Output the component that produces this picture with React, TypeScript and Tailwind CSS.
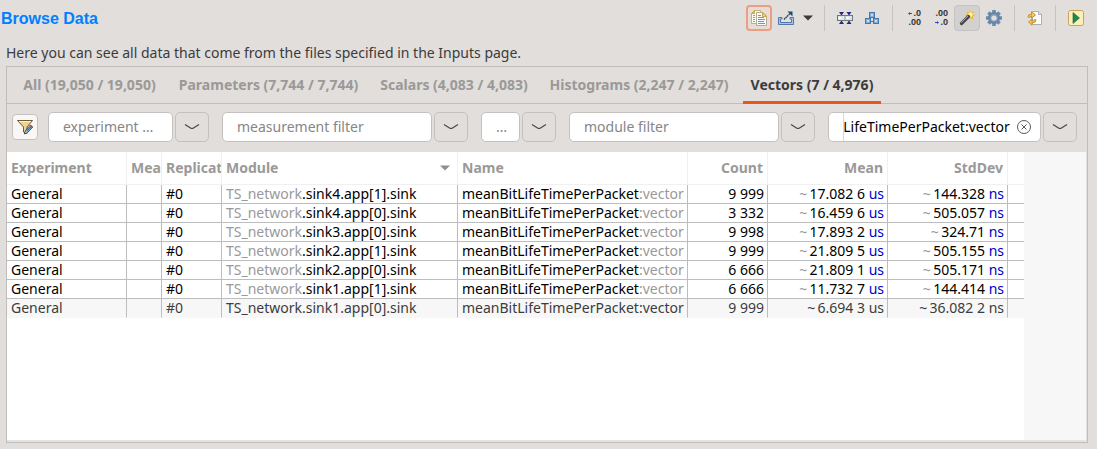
import React from "react";

function CopyIcon() {
  return (
    <svg width="16" height="16" viewBox="0 0 16 16" className="shrink-0" aria-hidden="true">
      <path d="M3.500 .5H9.500V13.500H.5V3.500Z" fill="#fbfaf0" stroke="#c9b36a" />
      <path d="M.5 3.500H3.500V.5Z" fill="#e2c15c" stroke="#c9a94e" />
      <path d="M2 5.500H4M2 7.500H4M2 9.500H4M2 11.500H4" stroke="#8ba2c8" />
      <path d="M5.500 2.500H12L15.500 6V15.500H5.500Z" fill="#f6f9fd" stroke="#b0ad92" />
      <path d="M11.500 2.500V6.500H15.500Z" fill="#f0d684" stroke="#c9a94e" />
      <path d="M7 5.500H10M7 7.500H13M7 9.500H14M7 11.500H13M7 13.500H14" stroke="#7394cc" />
    </svg>
  );
}

function ExportIcon() {
  return (
    <svg width="16" height="16" viewBox="0 0 16 16" aria-hidden="true">
      <path d="M.5 7.500H4V9H2.500V12.500H13.500V9H12V7.500H15.500V14.500H.5Z" fill="#a9c3e6" stroke="#5577ad" />
      <path d="M6 9.500L12 3.500" stroke="#1c4263" strokeWidth="1.400" strokeDasharray="1.600 .6" />
      <path d="M9.500 1.500H14.500V6.500Z" fill="#1c4c73" />
    </svg>
  );
}

function CellWidthIcon() {
  return (
    <svg width="16" height="16" viewBox="0 0 16 16" aria-hidden="true">
      <path d="M2 2H7L4.500 5.500ZM9.500 2H14.500L12 5.500ZM2 14H7L4.500 10.500ZM9.500 14H14.500L12 10.500Z" fill="#25258c" />
      <rect x=".5" y="5.500" width="15" height="5" fill="#dce8e6" stroke="#6c7775" />
      <path d="M2 7H4V9H2ZM9.500 7H11.500V9H9.500Z" fill="#fff" />
      <path d="M8 5.500V10.500" stroke="#8b9a98" />
    </svg>
  );
}

function CubesIcon() {
  return (
    <svg width="16" height="16" viewBox="0 0 16 16" aria-hidden="true">
      <g fill="#86aedb" stroke="#4776a8">
        <rect x="5.500" y="2.500" width="5" height="5" />
        <rect x="1.500" y="8.500" width="5" height="5" />
        <rect x="9.500" y="8.500" width="5" height="5" />
      </g>
      <path d="M7 4H9V6H7ZM3 10H5V12H3ZM11 10H13V12H11Z" fill="#c3dbf2" />
      <path d="M6.500 11.500H9.500" stroke="#4776a8" />
    </svg>
  );
}

function Arrow({ flip = false }: { flip?: boolean }) {
  return (
    <svg width="4" height="3" viewBox="0 0 4 3" className={flip ? "rotate-180" : ""} aria-hidden="true">
      <path d="M0 1.500L2 0V3ZM1.500 1H4V2H1.500Z" fill="#2d45d0" />
    </svg>
  );
}

function DecimalsIcon({ more }: { more: boolean }) {
  return (
    <span className="flex w-4 flex-col items-end font-['Liberation_Sans'] text-[9px] leading-[9px] font-bold text-[#333]">
      <span className="flex items-center gap-px">{more ? <Arrow /> : null}{more ? ".0" : ".00"}</span>
      <span className="flex items-center gap-px">{more ? null : <Arrow flip />}{more ? ".00" : ".0"}</span>
    </span>
  );
}

function WandIcon() {
  return (
    <svg width="16" height="16" viewBox="0 0 16 16" aria-hidden="true">
      <path d="M11 0L12 2.500L15 1L13.800 4L16 5.500L13.500 6.500L14.500 9.500L11.500 8L9.500 9.500L9 6.500L5.500 5.500L8.500 4L7.500 1.500L10 2.500Z" fill="#f4b91d" />
      <circle cx="11.500" cy="4.500" r="2.200" fill="#fff3a8" />
      <path d="M2.500 13.500L9.500 6.500" stroke="#48484a" strokeWidth="3.200" strokeLinecap="round" />
      <path d="M2.200 12.800L9 6" stroke="#a5a5a5" />
    </svg>
  );
}

function GearIcon() {
  return (
    <svg width="16" height="16" viewBox="0 0 16 16" aria-hidden="true">
      <g stroke="#6c8cab" strokeWidth="3.600">
        <path d="M8 0V16M0 8H16M2.400 2.400L13.600 13.600M13.600 2.400L2.400 13.600" />
      </g>
      <circle cx="8" cy="8" r="5" fill="#7f9dba" stroke="#6484a5" strokeWidth="2" />
      <circle cx="8" cy="8" r="2.600" fill="#e1dedb" />
    </svg>
  );
}

function RefreshFileIcon() {
  return (
    <svg width="16" height="16" viewBox="0 0 16 16" aria-hidden="true">
      <path d="M5.500 1.500H11.500L14.500 4.500V14.500H5.500Z" fill="#fdfdfd" stroke="#a9aebb" />
      <path d="M11.500 1.500V4.500H14.500" fill="#dbe3f0" stroke="#a9aebb" />
      <path d="M2 8V7Q2 5 5 5M8 9V10Q8 12 4.500 12" fill="none" stroke="#c98d22" strokeWidth="2.600" />
      <path d="M4.500 1.800L8.500 5L4.500 8ZM5 9L1.500 12L5 15.200Z" fill="#f4cd6a" stroke="#c98d22" />
      <path d="M2 8V7Q2 5 5 5M8 9V10Q8 12 4.500 12" fill="none" stroke="#f4cd6a" />
    </svg>
  );
}

function RunIcon() {
  return (
    <svg width="16" height="16" viewBox="0 0 16 16" aria-hidden="true">
      <rect x=".5" y=".5" width="15" height="15" rx="2" fill="#fdefb8" stroke="#c9a35e" />
      <path d="M5 2.500L11.500 8L5 13.500Z" fill="#1f8a4a" stroke="#14693a" strokeWidth=".6" />
    </svg>
  );
}

function FunnelIcon() {
  return (
    <svg width="18" height="18" viewBox="0 0 18 18" aria-hidden="true">
      <path d="M1.500 2.500H16.500L11 9V15.500L7.500 14V9Z" fill="#efd58b" stroke="#5c4b28" strokeWidth=".9" />
      <path d="M3 3.500H15" stroke="#fff3c8" />
      <path d="M8.500 16L9.500 12.500L14.500 7L16.700 9L11.500 14.500Z" fill="#fff" stroke="#29323c" strokeWidth=".9" />
      <path d="M10.500 13.500L15 8.800" stroke="#2d7fb8" strokeWidth="1.800" />
      <path d="M14 7.500L16.500 9.500" stroke="#b5452f" strokeWidth="1.500" />
    </svg>
  );
}

function ToolButton({ label, look = "plain", children }: {
  label: string;
  look?: "plain" | "focused" | "pressed";
  children: React.ReactNode;
}) {
  const looks = {
    plain: "border border-transparent",
    focused: "border-2 border-[#eb9e83] bg-[#e6ddd6]",
    pressed: "border border-[#c3c3c3] bg-[#d2d1cf]",
  };
  return (
    <button type="button" aria-label={label} className={`flex size-[26px] items-center justify-center rounded-[4px] ${looks[look]}`}>
      {children}
    </button>
  );
}

function Separator() {
  return <span className="h-[26px] w-px bg-[#c6c3c0]" />;
}

const tabs = [
  { label: "All (19,050 / 19,050)", width: "w-[149px]" },
  { label: "Parameters (7,744 / 7,744)", width: "w-[193px]" },
  { label: "Scalars (4,083 / 4,083)", width: "w-[162px]" },
  { label: "Histograms (2,247 / 2,247)", width: "w-[192px]" },
  { label: "Vectors (7 / 4,976)", width: "w-[138px]", active: true },
];

const filters = [
  { label: "Experiment", placeholder: "experiment …", value: "" },
  { label: "Measurement", placeholder: "measurement filter", value: "" },
  { label: "Replication", placeholder: "…", value: "" },
  { label: "Module", placeholder: "module filter", value: "" },
  { label: "Name", placeholder: "name filter", value: "meanBitLifeTimePerPacket:vector" },
];

const columns = [
  { label: "Experiment", width: "w-[120px]" },
  { label: "Mea", width: "w-[35px]" },
  { label: "Replicat", width: "w-[60px]" },
  { label: "Module", width: "w-[236px]", sorted: true },
  { label: "Name", width: "w-[230px]" },
  { label: "Count", width: "w-[80px]", right: true },
  { label: "Mean", width: "w-[120px]", right: true },
  { label: "StdDev", width: "w-[120px]", right: true },
  { label: "", width: "w-[16px]" },
];

const rows = [
  { module: ".sink4.app[1].sink", count: "9 999", mean: "17.082 6", dev: "144.328" },
  { module: ".sink4.app[0].sink", count: "3 332", mean: "16.459 6", dev: "505.057" },
  { module: ".sink3.app[0].sink", count: "9 998", mean: "17.893 2", dev: "324.71" },
  { module: ".sink2.app[1].sink", count: "9 999", mean: "21.809 5", dev: "505.155" },
  { module: ".sink2.app[0].sink", count: "6 666", mean: "21.809 1", dev: "505.171" },
  { module: ".sink1.app[1].sink", count: "6 666", mean: "11.732 7", dev: "144.414" },
  { module: ".sink1.app[0].sink", count: "9 999", mean: "6.694 3", dev: "36.082 2", selected: true },
];

const scrollToEnd = (el: HTMLInputElement | null) => {
  if (el) el.scrollLeft = el.scrollWidth;
};

function Filter({ label, placeholder, value }: { label: string; placeholder: string; value: string }) {
  return (
    <div className="flex min-w-0 gap-[2px]">
      <div className="flex h-[30px] min-w-0 flex-1 items-center rounded-[5px] border border-[#c4c2c0] bg-white pl-[14px]">
        <input
          ref={scrollToEnd}
          aria-label={`${label} filter`}
          placeholder={placeholder}
          defaultValue={value}
          className={`h-full min-w-0 flex-1 bg-transparent pb-px text-black outline-none placeholder:text-[#868686] ${value ? "border-l border-[#d8d8d8]" : ""}`}
        />
        {value ? (
          <button type="button" aria-label="Clear" className="mr-2 ml-[6px] shrink-0">
            <svg width="16" height="16" viewBox="0 0 16 16" fill="none" stroke="#5a5a5a" aria-hidden="true">
              <circle cx="8" cy="8" r="6.500" />
              <path d="M5.500 5.500L10.500 10.500M10.500 5.500L5.500 10.500" />
            </svg>
          </button>
        ) : null}
      </div>
      <button type="button" aria-label={`${label} choices`} className="flex h-[30px] w-[34px] shrink-0 items-center justify-center rounded-[5px] border border-[#c4c2c0]">
        <svg width="16" height="8" viewBox="0 0 16 8" fill="none" stroke="#4a4a4a" strokeWidth="1.200" aria-hidden="true">
          <path d="M1 1.500L6.500 5Q8 6 9.500 5L15 1.500" />
        </svg>
      </button>
    </div>
  );
}

export default function App() {
  const line = "border-r border-r-[#bdbdbd]";
  return (
    <main className="flex min-h-screen flex-col bg-[#e1dedb] font-['Noto_Sans','Open_Sans',sans-serif] text-[14px] leading-[18px] text-[#3c3c3c]">
      <header className="flex h-9 items-center justify-between pr-2 pl-px">
        <h1 className="pt-[2px] font-['Liberation_Sans',Arial,sans-serif] text-[16px] font-bold text-[#0080ff]">Browse Data</h1>
        <div className="flex items-center">
          <div className="flex gap-px">
            <ToolButton label="Copy" look="focused"><CopyIcon /></ToolButton>
            <ToolButton label="Export"><ExportIcon /></ToolButton>
          </div>
          <button type="button" aria-label="Export options" className="mr-[10px] ml-[3px]">
            <svg width="12" height="6" viewBox="0 0 12 6" aria-hidden="true"><path d="M1 .5H11L6 5.500Z" fill="#3a3a3a" /></svg>
          </button>
          <Separator />
          <div className="flex gap-px px-[7px]">
            <ToolButton label="Narrow columns"><CellWidthIcon /></ToolButton>
            <ToolButton label="Group by module"><CubesIcon /></ToolButton>
          </div>
          <Separator />
          <div className="flex gap-px px-[7px]">
            <ToolButton label="Increase decimals"><DecimalsIcon more /></ToolButton>
            <ToolButton label="Decrease decimals"><DecimalsIcon more={false} /></ToolButton>
            <ToolButton label="Highlight" look="pressed"><WandIcon /></ToolButton>
            <ToolButton label="Settings"><GearIcon /></ToolButton>
          </div>
          <Separator />
          <div className="flex px-[7px]">
            <ToolButton label="Reload"><RefreshFileIcon /></ToolButton>
          </div>
          <Separator />
          <div className="flex pl-[7px]">
            <ToolButton label="Run"><RunIcon /></ToolButton>
          </div>
        </div>
      </header>

      <p className="px-[6px] pt-2 pb-1">Here you can see all data that come from the files specified in the Inputs page.</p>

      <section className="mr-[9px] mb-[6px] ml-[6px] flex flex-1 flex-col border border-[#c0bebc]">
        <div role="tablist" className="flex h-[37px] gap-2 border-b border-[#c0bebc] pl-2 text-[#9a9998]">
          {tabs.map((t) => (
            <button
              key={t.label}
              type="button"
              role="tab"
              aria-selected={!!t.active}
              className={`h-[37px] shrink-0 border-b-[3px] pt-[2px] font-bold whitespace-nowrap ${t.width} ${t.active ? "border-[#e95420] text-[#3c3c3c]" : "border-transparent"}`}
            >
              {t.label}
            </button>
          ))}
        </div>

        <div className="flex h-12 items-center gap-[10px] pr-[10px] pb-[2px] pl-[5px]">
          <button type="button" aria-label="Advanced filter" className="flex size-[26px] shrink-0 items-center justify-center rounded-[4px] border border-[#c4c2c0] bg-[#f8f7f6]">
            <FunnelIcon />
          </button>
          <div className="grid flex-1 grid-cols-[161fr_246fr_75fr_246fr_249fr] gap-[13px]">
            {filters.map((f) => <Filter key={f.label} {...f} />)}
          </div>
        </div>

        <div className="flex flex-1 overflow-hidden border-r border-b-2 border-r-[#e4e3e2] border-b-[#e4e3e2] bg-white">
          <div className="w-[1017px] shrink-0">
            <table className="w-full table-fixed border-separate border-spacing-0">
              <colgroup>
                {columns.map((c, i) => <col key={i} className={c.width} />)}
              </colgroup>
              <thead>
                <tr className="h-[33px] text-left text-[#9a9998]">
                  {columns.map((c, i) => (
                    <th
                      key={i}
                      scope="col"
                      aria-sort={c.sorted ? "descending" : undefined}
                      className={`overflow-hidden border-b border-[#f0f0f0] pl-1 font-bold whitespace-nowrap ${c.label ? "border-r" : ""} ${c.right ? "pr-1 text-right" : ""}`}
                    >
                      {c.sorted ? (
                        <span className="flex items-center justify-between pr-[7px]">
                          {c.label}
                          <svg width="10" height="6" viewBox="0 0 10 6" aria-hidden="true"><path d="M0 .5H10L5 5.500Z" fill="#8f8f8f" /></svg>
                        </span>
                      ) : c.label}
                    </th>
                  ))}
                </tr>
              </thead>
              <tbody>
                {rows.map((r) => {
                  const edge = r.selected ? "border-b border-b-transparent" : "border-b border-b-[#bdbdbd]";
                  const cell = `overflow-hidden whitespace-nowrap pl-1 ${line} ${edge}`;
                  const num = `pr-[3px] text-right ${cell}`;
                  const dim = r.selected ? "" : "text-[#999]";
                  const unit = r.selected ? "" : "text-[#0000c8]";
                  return (
                    <tr key={r.module} className={`h-[19px] ${r.selected ? "bg-[#f7f7f7]" : "text-black"}`}>
                      <td className={cell}>General</td>
                      <td className={cell}></td>
                      <td className={cell}>#0</td>
                      <td className={cell}><span className={dim}>TS_network</span>{r.module}</td>
                      <td className={cell}>meanBitLifeTimePerPacket<span className={dim}>:vector</span></td>
                      <td className={num}>{r.count}</td>
                      <td className={num}><span className={dim}>~{"\u2009"}</span>{r.mean} <span className={unit}>us</span></td>
                      <td className={num}><span className={dim}>~{"\u2009"}</span>{r.dev} <span className={unit}>ns</span></td>
                      <td className={edge}></td>
                    </tr>
                  );
                })}
              </tbody>
            </table>
          </div>
          <div className="flex-1 bg-[#f7f7f7]" />
        </div>
      </section>
    </main>
  );
}
